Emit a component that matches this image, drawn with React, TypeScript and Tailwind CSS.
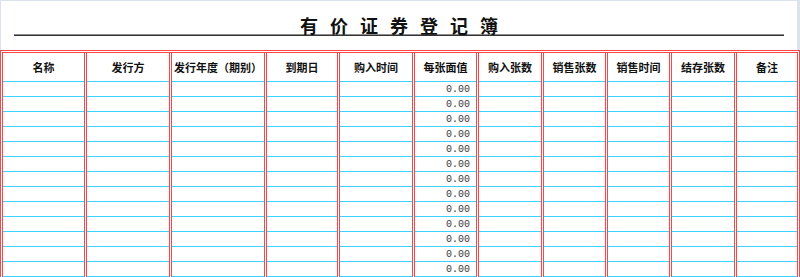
import React from 'react';

const cols = [
  { name: '名称', w: 'w-[84px]' },
  { name: '发行方', w: 'w-[85px]' },
  { name: '发行年度（期别）', w: 'w-[95px]' },
  { name: '到期日', w: 'w-[73px]' },
  { name: '购入时间', w: 'w-[75px]' },
  { name: '每张面值', w: 'w-[64px]' },
  { name: '购入张数', w: 'w-[65px]' },
  { name: '销售张数', w: 'w-[64px]' },
  { name: '销售时间', w: 'w-[64px]' },
  { name: '结存张数', w: 'w-[65px]' },
  { name: '备注', w: 'w-[60px]' },
];

const rows = Array.from({ length: 14 }, (_, i) => i);
const title = ['有', '价', '证', '券', '登', '记', '簿'];

export default function App() {
  return (
    <div className="w-[800px] h-[277px] overflow-hidden bg-white border-t border-[#dde3ec]" style={{ fontFamily: '"Noto Sans CJK SC", "Noto Sans", sans-serif' }}>
      <div className="border-l border-r-[3px] border-[#dde3ec] pt-[15px] pb-[14px]">
        <div className="flex justify-center gap-[12px] h-[18px] text-[18px] leading-[18px] font-semibold text-[#111]">
          {title.map(c => <span key={c}>{c}</span>)}
        </div>
        <div className="mx-[13px] h-0 border-t border-b border-t-[#8c8c8c] border-b-[#333]" />
      </div>
      <div className="flex border-[3px] border-double border-[#ff4646] border-b-0">
        {cols.map((c, ci) => (
          <div key={c.name} className={`${c.w} shrink-0 flex flex-col ${ci < cols.length - 1 ? 'border-r-[3px] border-double border-r-[#ff4646]' : ''}`}>
            <div className="h-[29px] flex items-center justify-center border-b border-[#3cd2ff] text-[11px] font-bold text-[#111] whitespace-nowrap">
              {c.name}
            </div>
            {rows.map(r => (
              <div key={r} className="h-[15px] border-b border-[#3cd2ff] flex items-center justify-end pr-[6px] text-[10px] text-[#3a3a3a]" style={{ fontFamily: '"Liberation Mono", monospace' }}>
                {ci === 5 && r < 13 ? '0.00' : ''}
              </div>
            ))}
          </div>
        ))}
      </div>
    </div>
  );
}
